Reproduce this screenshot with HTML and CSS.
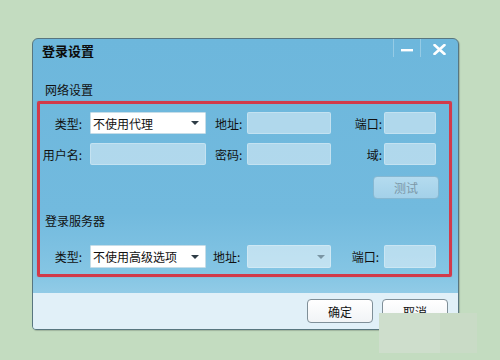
FILE: index.html
```html
<!DOCTYPE html>
<html lang="zh-CN">
<head>
    <meta charset="UTF-8">
    <title>登录设置</title>
    <link rel="stylesheet" href="styles.css">
</head>
<body>
    <div class="escritorio">
        <!-- Ventana de configuración -->
        <div class="ventana">
            <div class="titulo">
                <span class="titulo-texto">登录设置</span>
                <div class="controles">
                    <div class="control control-min">
                        <svg width="12" height="4" viewBox="0 0 12 4"><rect x="0" y="1" width="12" height="2.4" fill="#fff"/></svg>
                    </div>
                    <div class="control control-cerrar">
                        <svg width="13" height="11" viewBox="0 0 13 11"><path d="M1.5 1 L11.5 10 M11.5 1 L1.5 10" stroke="#fff" stroke-width="2.6" stroke-linecap="round"/></svg>
                    </div>
                </div>
            </div>

            <div class="contenido">
                <div class="seccion-titulo">网络设置</div>
                <div class="marco">
                    <div class="fila">
                        <span class="etiqueta">类型:</span>
                        <div class="selector"><span>不使用代理</span><i class="flecha"></i></div>
                        <span class="etiqueta-media">地址:</span>
                        <div class="campo"></div>
                        <span class="etiqueta-der">端口:</span>
                        <div class="campo"></div>
                    </div>
                    <div class="fila">
                        <span class="etiqueta">用户名:</span>
                        <div class="campo"></div>
                        <span class="etiqueta-media">密码:</span>
                        <div class="campo"></div>
                        <span class="etiqueta-der">域:</span>
                        <div class="campo"></div>
                    </div>
                    <div class="fila-boton">
                        <div class="boton-prueba">测试</div>
                    </div>
                    <div class="subtitulo">登录服务器</div>
                    <div class="fila fila-servidor">
                        <span class="etiqueta">类型:</span>
                        <div class="selector"><span>不使用高级选项</span><i class="flecha"></i></div>
                        <span class="etiqueta-media corta">地址:</span>
                        <div class="campo selector-off"><i class="flecha gris"></i></div>
                        <span class="etiqueta-der corta">端口:</span>
                        <div class="campo"></div>
                    </div>
                </div>
            </div>

            <div class="pie">
                <div class="boton">确定</div>
                <div class="boton">取消</div>
            </div>
        </div>
    </div>

    <!-- Marca de agua -->
    <div class="marca">
        <div class="marca-a"></div>
        <div class="marca-b"></div>
    </div>
</body>
</html>
```

FILE: styles.css
```css
body {
    margin: 0;
    background: #c3dcc0;
    font-family: "Noto Sans CJK SC", "Noto Sans", sans-serif;
    font-size: 12px;
    color: #111;
    width: 500px;
    height: 360px;
    overflow: hidden;
}

.escritorio {
    padding: 38px 0 0 32px;
}

/* Ventana */
.ventana {
    width: 425px;
    height: 290px;
    border: 1px solid #58767f;
    border-radius: 6px 6px 4px 4px;
    box-shadow: 1px 1px 1px rgba(0,0,0,0.18);
    display: flex;
    flex-direction: column;
    overflow: hidden;
    background: linear-gradient(180deg, #6db7dc 0%, #72bade 60%, #86c6e4 82%, #abd6ec 100%);
}

.titulo {
    height: 24px;
    display: flex;
    align-items: center;
    padding-left: 9px;
}
.titulo-texto {
    font-size: 13px;
    font-weight: bold;
    color: #0c0c0c;
    line-height: 16px;
}
.controles {
    margin-left: auto;
    display: flex;
    align-self: flex-start;
    height: 18px;
}
.control {
    display: flex;
    align-items: center;
    justify-content: center;
}
.control-min {
    width: 26px;
    border-left: 1px solid rgba(255,255,255,0.28);
    border-right: 1px solid rgba(255,255,255,0.28);
    padding-top: 4px;
}
.control-cerrar {
    width: 37px;
    padding-top: 2px;
}

.contenido {
    flex: 1;
    padding: 19px 6px 0 4px;
}
.seccion-titulo {
    line-height: 16px;
    padding-left: 8px;
    margin-bottom: 3px;
}

/* Marco rojo */
.marco {
    border: 3px solid #d23a4a;
    border-radius: 2px;
    padding: 8px 0 6px 0;
    box-shadow: 0 0 1px rgba(210,58,74,0.6);
}

.fila {
    display: grid;
    grid-template-columns: 50px 116px 41px 84px 53px 52px;
    height: 22px;
    align-items: center;
    margin-bottom: 9px;
}
.fila-servidor {
    height: 23px;
    margin: 16px 0 0 0;
}
.etiqueta {
    text-align: right;
    padding-right: 8px;
}
.etiqueta-media {
    padding-left: 9px;
}
.etiqueta-media.corta {
    padding-left: 7px;
}
.etiqueta-der {
    text-align: right;
    padding-right: 2px;
}
.etiqueta-der.corta {
    padding-right: 5px;
}

.selector {
    height: 100%;
    box-sizing: border-box;
    background: #fff;
    border: 1px solid #c6dde8;
    border-radius: 1px;
    display: flex;
    align-items: center;
    padding: 0 6px 0 2px;
}
.flecha {
    margin-left: auto;
    width: 0;
    height: 0;
    border-left: 4px solid transparent;
    border-right: 4px solid transparent;
    border-top: 4px solid #2f3c46;
}
.flecha.gris {
    border-top-color: #7a95a4;
}

.campo {
    height: 100%;
    box-sizing: border-box;
    background: rgba(255,255,255,0.45);
    border: 1px solid rgba(255,255,255,0.25);
    border-radius: 2px;
}
.selector-off {
    display: flex;
    align-items: center;
    padding-right: 5px;
    background: rgba(255,255,255,0.5);
}

.fila-boton {
    display: flex;
    justify-content: flex-end;
    padding-right: 10px;
    margin-top: 11px;
}
.boton-prueba {
    width: 64px;
    height: 21px;
    border: 1px solid #86b8d2;
    border-radius: 4px;
    background: linear-gradient(180deg, #b4dbef 0%, #a3d1e9 100%);
    color: #7c97a7;
    display: flex;
    align-items: center;
    justify-content: center;
}

.subtitulo {
    line-height: 16px;
    margin-top: 14px;
    padding-left: 5px;
}

/* Pie de la ventana */
.pie {
    height: 36px;
    background: #e1f0f8;
    display: flex;
    justify-content: flex-end;
    align-items: flex-start;
    gap: 9px;
    padding: 6px 10px 0 0;
    box-sizing: border-box;
}
.boton {
    width: 64px;
    height: 22px;
    border: 1px solid #7f8f98;
    border-radius: 4px;
    background: linear-gradient(180deg, #ffffff 0%, #f1f4f6 100%);
    display: flex;
    align-items: center;
    justify-content: center;
    color: #111;
}

/* Marca de agua encima */
.marca {
    position: absolute;
    left: 379px;
    top: 313px;
    width: 98px;
    height: 40px;
    display: flex;
}
.marca-a {
    width: 61px;
    background: #cedecc;
}
.marca-b {
    flex: 1;
    background: #c9dbc6;
}
```
